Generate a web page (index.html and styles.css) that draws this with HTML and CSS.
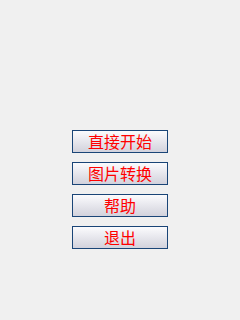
FILE: index.html
```html
<!DOCTYPE html>
<html lang="zh-CN">
<head>
<meta charset="UTF-8">
<meta name="viewport" content="width=240, initial-scale=1.0">
<title>菜单</title>
<link rel="stylesheet" href="styles.css">
</head>
<body>
<div class="menu">
  <button class="menu-button">直接开始</button>
  <button class="menu-button">图片转换</button>
  <button class="menu-button">帮助</button>
  <button class="menu-button">退出</button>
</div>
</body>
</html>
```

FILE: styles.css
```css
body {
  margin: 0;
  padding: 0;
  width: 240px;
  height: 320px;
  background-color: #f0f0f0;
  font-family: "Noto Sans CJK SC", "DejaVu Sans", sans-serif;
}

.menu {
  display: flex;
  flex-direction: column;
  align-items: center;
  gap: 9px;
  padding-top: 130px;
}

.menu-button {
  width: 96px;
  height: 23px;
  margin: 0;
  padding: 0;
  border: 1px solid #1a4577;
  border-radius: 0;
  background: linear-gradient(to bottom, #fbfbfd, #d2d2dc);
  color: #ff0000;
  font-family: "Noto Sans CJK SC", sans-serif;
  font-size: 16px;
  font-weight: 400;
  line-height: 21px;
  letter-spacing: 0;
}
```
